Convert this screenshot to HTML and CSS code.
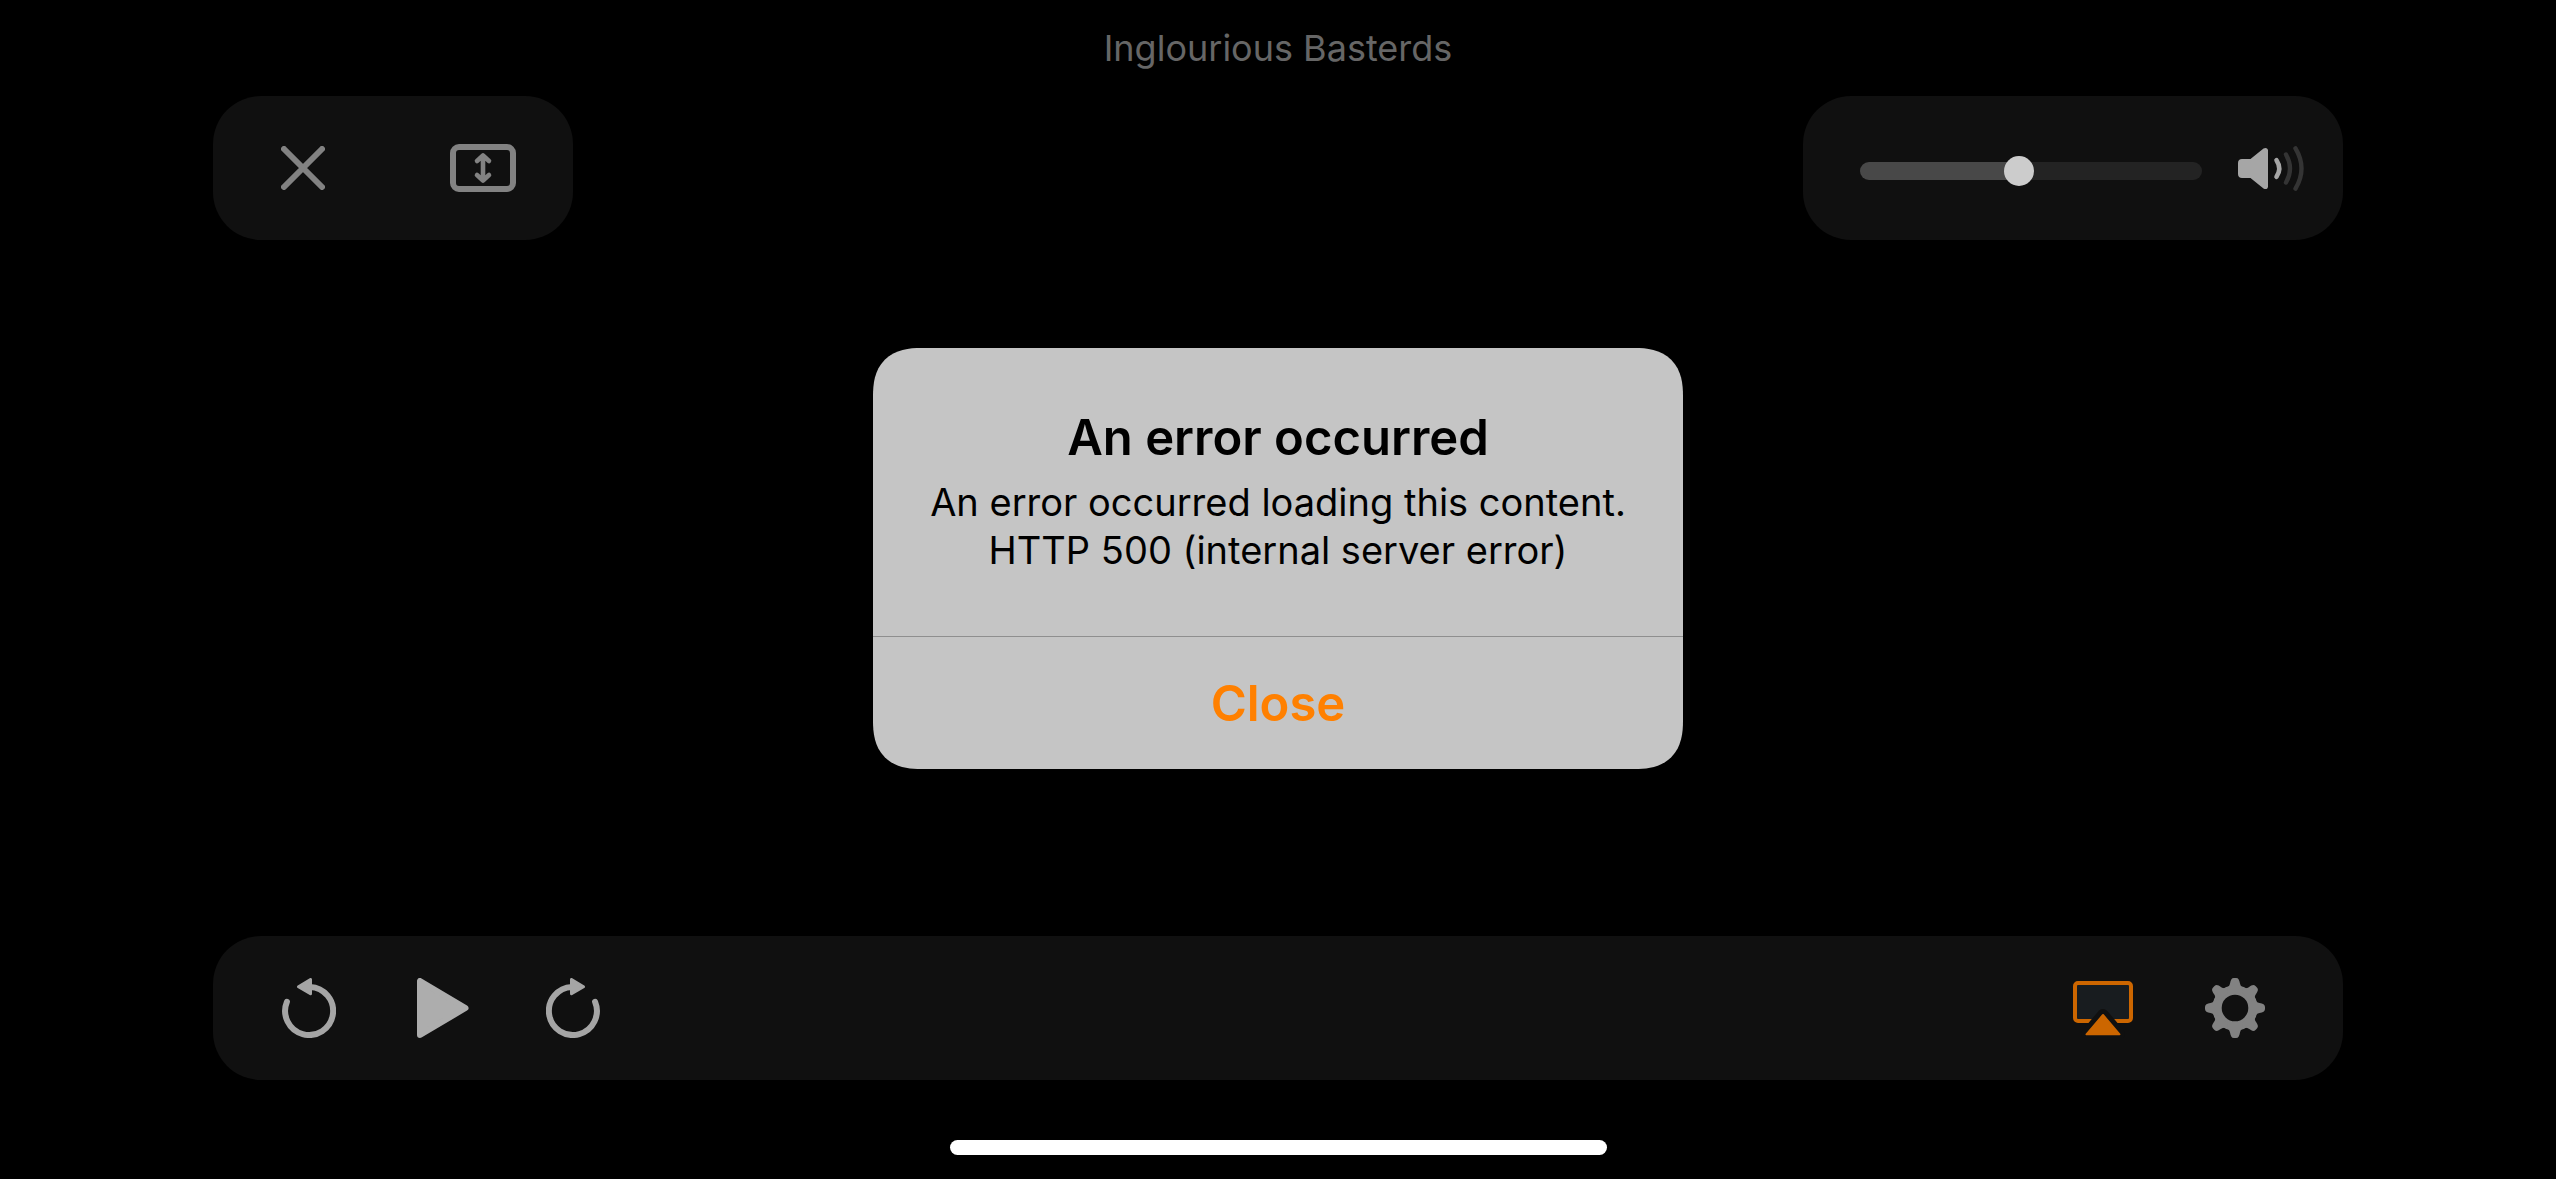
FILE: index.html
```html
<!DOCTYPE html>
<html lang="en">
<head>
  <meta charset="utf-8">
  <meta name="viewport" content="width=device-width, initial-scale=1">
  <title>Inglourious Basterds</title>
  <link rel="stylesheet" href="styles.css">
</head>
<body class="player">
  <h1 class="player-title">Inglourious Basterds</h1>

  <header class="top-controls">
    <div class="panel window-controls">
      <button class="control wide" type="button" aria-label="Close player">
        <svg width="44" height="44" viewBox="0 0 44 44" fill="none" stroke="#828282" stroke-width="6" stroke-linecap="round">
          <path d="M3 3L41 41M41 3L3 41"/>
        </svg>
      </button>
      <button class="control wide" type="button" aria-label="Fill screen">
        <svg width="66" height="48" viewBox="0 0 66 48" fill="none" stroke="#828282">
          <rect x="3" y="3" width="60" height="42" rx="6" stroke-width="6"/>
          <path d="M33 12V36M27 17L33 11.500L39 17M27 31L33 36.500L39 31" stroke-width="4.600" stroke-linecap="round" stroke-linejoin="round"/>
        </svg>
      </button>
    </div>

    <div class="panel volume">
      <input class="volume-slider" type="range" min="0" max="100" value="46" aria-label="Volume">
      <button class="control mute" type="button" aria-label="Mute">
        <svg width="66" height="45" viewBox="0 0 66 45" fill="none" stroke-linecap="round">
          <path fill="#a6a6a6" d="M4 13H12.500L25.500 2.600C27.500 1.200 30 2 30 4.500V40.500C30 43 27.500 43.800 25.500 42.400L12.500 32H4C1.500 32 0 30.500 0 28V17C0 14.500 1.500 13 4 13Z"/>
          <path stroke="#a6a6a6" stroke-width="4.600" d="M38.500 14.200Q44 22.500 38.500 30.800"/>
          <path stroke="#343434" stroke-width="4.400" d="M48 8.500Q56 22.500 48 36.500"/>
          <path stroke="#343434" stroke-width="4.400" d="M57.500 2.400Q69.500 22.500 57.500 42.600"/>
        </svg>
      </button>
    </div>
  </header>

  <footer class="panel playback">
    <button class="control" type="button" aria-label="Skip back">
      <svg width="54" height="60" viewBox="0 0 54 60" fill="none" stroke="#a5a5a5" stroke-linecap="round" stroke-linejoin="round">
        <path stroke-width="6" d="M28 9A24 24 0 1 1 4.900 23.900"/>
        <path fill="#a5a5a5" stroke-width="3" d="M28.500 1.500V15.800L16.500 8.700Z"/>
      </svg>
    </button>
    <button class="control" type="button" aria-label="Play">
      <svg width="56" height="60" viewBox="-4 0 56 60" fill="#adadad" stroke="#adadad" stroke-width="6" stroke-linejoin="round">
        <path d="M3 3V57L48.500 30Z"/>
      </svg>
    </button>
    <button class="control" type="button" aria-label="Skip forward">
      <svg width="54" height="60" viewBox="0 0 54 60" fill="none" stroke="#a5a5a5" stroke-linecap="round" stroke-linejoin="round">
        <path stroke-width="6" d="M26 9A24 24 0 1 0 49.100 23.900"/>
        <path fill="#a5a5a5" stroke-width="3" d="M25.500 1.500V15.800L37.500 8.700Z"/>
      </svg>
    </button>
    <button class="control airplay" type="button" aria-label="AirPlay">
      <svg width="60" height="60" viewBox="0 -3 60 60" stroke-linejoin="round">
        <rect x="2" y="2" width="56" height="38" rx="3" fill="#181c1f" stroke="#cc6600" stroke-width="4"/>
        <path fill="#101010" stroke="#101010" stroke-width="12" d="M30 34L14 53H46Z"/>
        <path fill="#cc6600" stroke="#cc6600" stroke-width="2" d="M30 34L13.500 53.300H46.500Z"/>
      </svg>
    </button>
    <button class="control" type="button" aria-label="Settings">
      <svg width="60" height="60" viewBox="0 0 60 60" fill="#828282">
        <defs>
          <path id="tooth" d="M21 9.200C23.600 9.400 24.400 8 25 5.500C25.700 2 26.400 0 29 0H31C33.600 0 34.300 2 35 5.500C35.600 8 36.400 9.400 39 9.200L36 14H24Z"/>
        </defs>
        <circle cx="30" cy="30" r="18" fill="none" stroke="#828282" stroke-width="9.400"/>
        <use href="#tooth"/>
        <use href="#tooth" transform="rotate(45 30 30)"/>
        <use href="#tooth" transform="rotate(90 30 30)"/>
        <use href="#tooth" transform="rotate(135 30 30)"/>
        <use href="#tooth" transform="rotate(180 30 30)"/>
        <use href="#tooth" transform="rotate(225 30 30)"/>
        <use href="#tooth" transform="rotate(270 30 30)"/>
        <use href="#tooth" transform="rotate(315 30 30)"/>
      </svg>
    </button>
  </footer>

  <div class="home-area"><div class="home-indicator"></div></div>

  <div class="overlay">
    <section class="alert" role="alertdialog" aria-labelledby="alert-title" aria-describedby="alert-text">
      <div class="alert-body">
        <h2 class="alert-title" id="alert-title">An error occurred</h2>
        <p class="alert-text" id="alert-text">An error occurred loading this content.<br>HTTP 500 (internal server error)</p>
      </div>
      <button class="alert-action" type="button">Close</button>
    </section>
  </div>
</body>
</html>
```
FILE: styles.css
```css
* {
  box-sizing: border-box;
}

.player {
  position: relative;
  display: flex;
  flex-direction: column;
  min-height: 100vh;
  margin: 0;
  padding: 0 213px;
  background: #000;
  font-family: Inter, "Liberation Sans", sans-serif;
}

.player-title {
  margin: 0;
  color: #666;
  font-size: 36px;
  font-weight: 400;
  line-height: 96px;
  text-align: center;
}

.top-controls {
  display: flex;
  justify-content: space-between;
}

.panel {
  display: flex;
  align-items: center;
  height: 144px;
  border-radius: 48px;
  background: #101010;
}

.control {
  display: flex;
  align-items: center;
  justify-content: center;
  width: 132px;
  height: 144px;
  padding: 0;
  border: 0;
  background: none;
}

.control.wide {
  width: 180px;
}

.control.mute {
  width: 66px;
}

.volume {
  gap: 36px;
  padding: 0 39px 0 57px;
}

.volume-slider {
  width: 342px;
  height: 30px;
  margin: 6px 0 0;
  appearance: none;
  background: none;
}

.volume-slider::-webkit-slider-runnable-track {
  height: 18px;
  border-radius: 9px;
  background: linear-gradient(to right, #484848 46%, #232323 46%);
}

.volume-slider::-webkit-slider-thumb {
  width: 30px;
  height: 30px;
  margin-top: -6px;
  appearance: none;
  border-radius: 50%;
  background: #ccc;
}

.playback {
  margin-top: auto;
  padding: 0 42px 0 30px;
}

.airplay {
  margin-left: auto;
}

.home-area {
  display: flex;
  align-items: flex-end;
  justify-content: center;
  height: 99px;
  padding-bottom: 24px;
}

.home-indicator {
  width: 657px;
  height: 15px;
  border-radius: 8px;
  background: #fff;
}

.overlay {
  position: absolute;
  inset: 0;
  display: flex;
  align-items: center;
  justify-content: center;
  padding-bottom: 63px;
}

.alert {
  width: 810px;
  overflow: hidden;
  border-radius: 42px;
  background: #c5c5c5;
  color: #000;
  text-align: center;
}

@supports (corner-shape: superellipse(1.3)) {
  .alert {
    border-radius: 48px;
    corner-shape: superellipse(1.3);
  }
}

.alert-body {
  padding: 60px 24px 62px;
}

.alert-title {
  margin: 0;
  font-size: 49px;
  font-weight: 600;
  line-height: 60px;
}

.alert-text {
  margin: 10px 0 0;
  font-size: 38px;
  line-height: 48px;
}

.alert-action {
  display: block;
  width: 100%;
  height: 133px;
  padding: 2px 0 0;
  border: 0;
  border-top: 1px solid #8f8f8f;
  background: none;
  color: #ff8000;
  font: 600 49px/60px Inter, "Liberation Sans", sans-serif;
}
```
